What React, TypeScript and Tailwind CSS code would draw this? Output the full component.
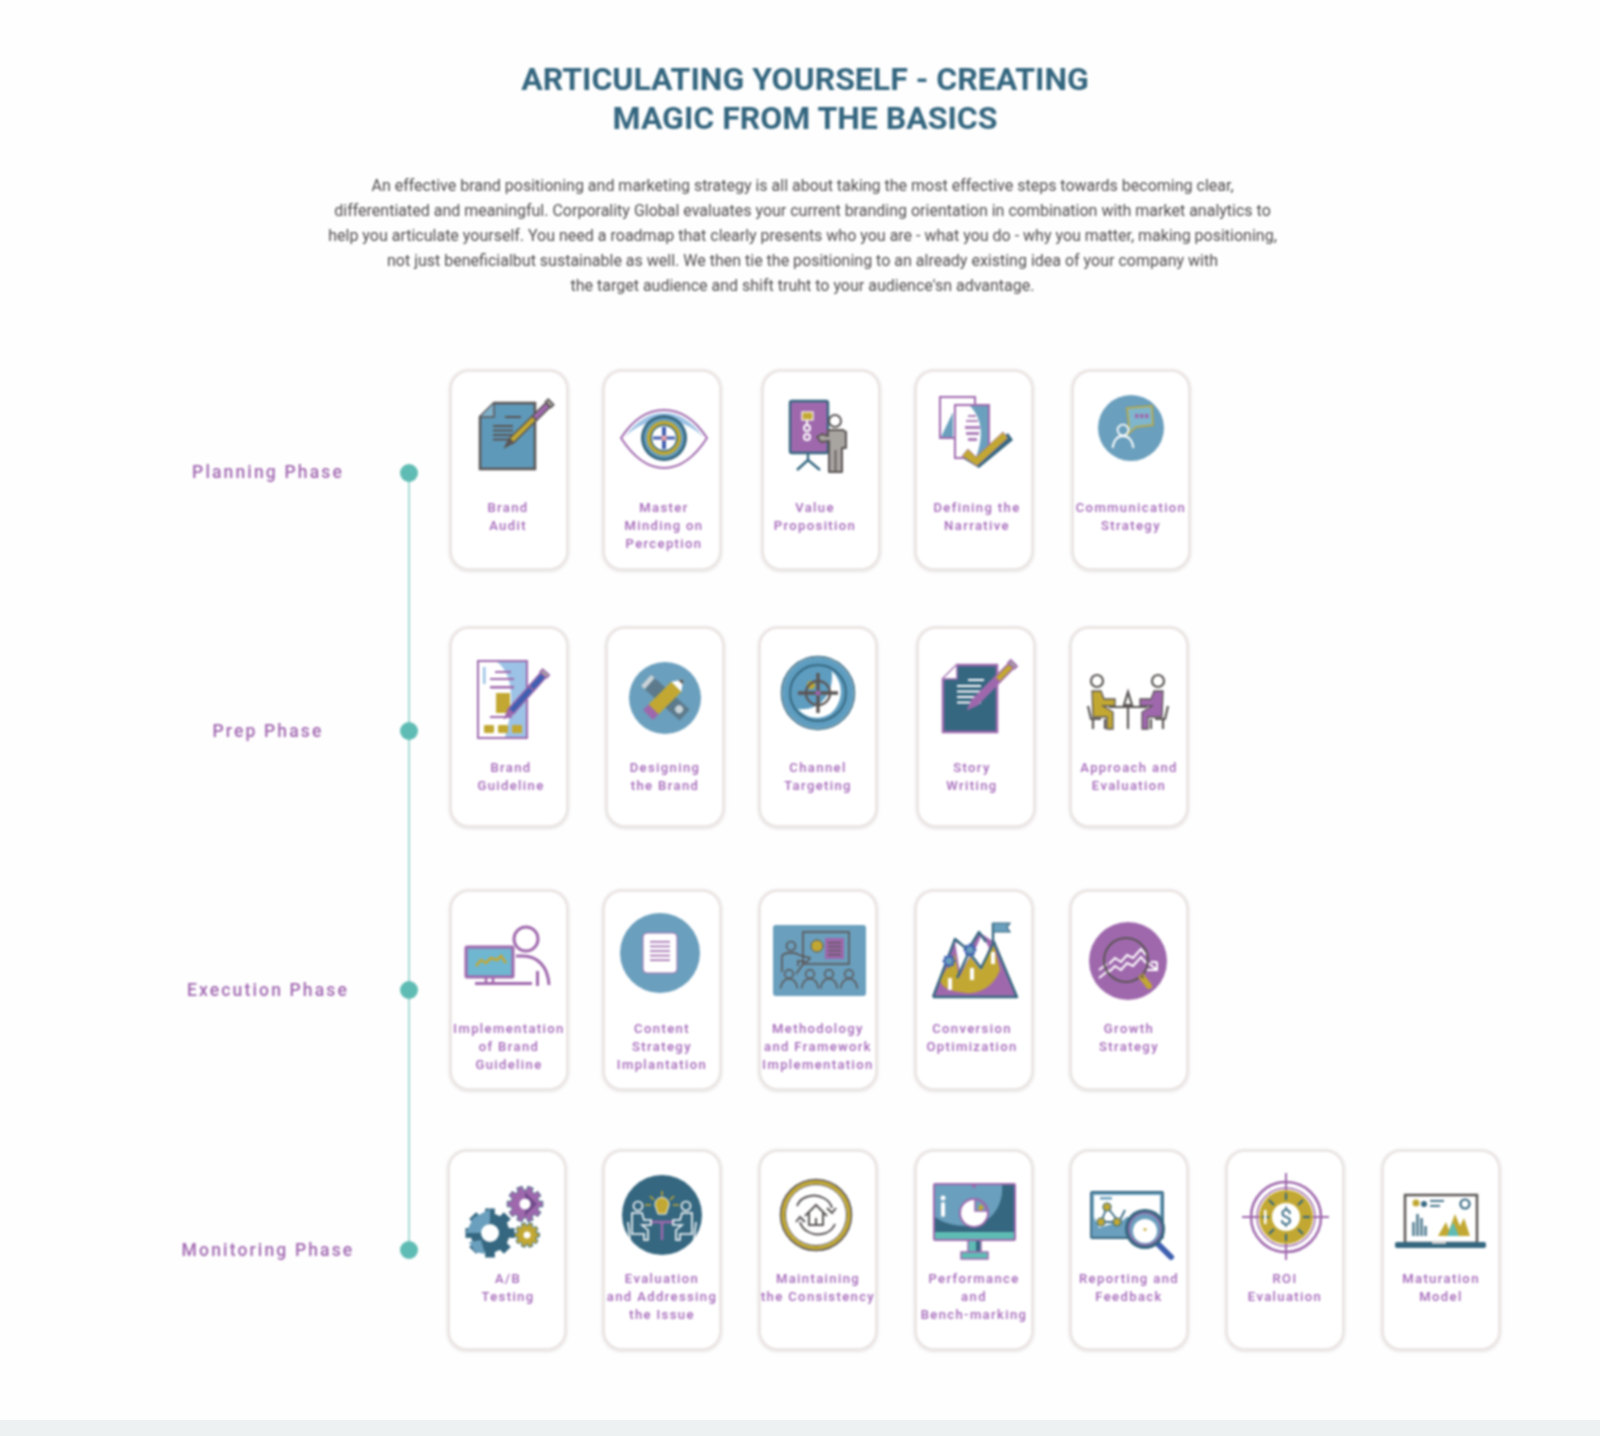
import React from 'react';

const BLUE = '#6a9fbd';
const TEAL = '#356780';
const PURPLE = '#9f68ad';
const GOLD = '#c2a832';
const GRAY = '#5b5555';
const LBLUE = '#9cc2e5';
const AQUA = '#5fbcb4';
const ROYAL = '#3f5fb0';

// icons are drawn in card coordinates, so the viewBox skips the card border
const Ico = ({ children }: { children: React.ReactNode }) => (
  <svg viewBox="2 2 112 118" width={112} height={118} className="mx-auto block">
    {children}
  </svg>
);

const gear = (cx: number, cy: number, r: number, teeth: number) => {
  const pts: string[] = [];
  const inner = r * 0.78;
  const step = (Math.PI * 2) / teeth;
  for (let i = 0; i < teeth; i++) {
    const a = i * step;
    const p = (rad: number, off: number) =>
      `${(cx + rad * Math.cos(a + off)).toFixed(1)},${(cy + rad * Math.sin(a + off)).toFixed(1)}`;
    pts.push(p(inner, -step * 0.5), p(inner, -step * 0.32), p(r, -step * 0.25), p(r, step * 0.25), p(inner, step * 0.32));
  }
  return pts.join(' ');
};

const Pen = ({ x1, y1, x2, y2, w = 5, a = GOLD, b = PURPLE, line = GRAY }: { x1: number; y1: number; x2: number; y2: number; w?: number; a?: string; b?: string; line?: string }) => {
  const len = Math.hypot(x2 - x1, y2 - y1);
  const ang = (Math.atan2(y2 - y1, x2 - x1) * 180) / Math.PI;
  return (
    <g transform={`translate(${x1} ${y1}) rotate(${ang})`} stroke={line} strokeWidth={1.5}>
      <polygon points={`0,0 9,${-w / 2} 9,${w / 2}`} fill={line} />
      <rect x={9} y={-w / 2} width={len * 0.5} height={w} fill={a} />
      <rect x={9 + len * 0.5} y={-w / 2} width={len * 0.5 - 13} height={w} fill={b} />
      <rect x={len - 4} y={-w / 2 - 1} width={4} height={w + 2} fill="#a8a4a0" />
    </g>
  );
};

const Lines = ({ x, y, w, n, gap = 5, h = 2, color = GRAY }: { x: number; y: number; w: number; n: number; gap?: number; h?: number; color?: string }) => (
  <g fill={color}>
    {Array.from({ length: n }).map((_, i) => (
      <rect key={i} x={x} y={y + i * gap} width={w} height={h} />
    ))}
  </g>
);

const Person = ({ x, y, s = 1, color = '#fff', sw = 1.5 }: { x: number; y: number; s?: number; color?: string; sw?: number }) => (
  <g fill="none" stroke={color} strokeWidth={sw}>
    <circle cx={x} cy={y} r={3.6 * s} />
    <path d={`M${x - 7 * s} ${y + 12 * s} C${x - 6 * s} ${y + 6 * s} ${x - 3 * s} ${y + 4 * s} ${x} ${y + 4 * s} C${x + 3 * s} ${y + 4 * s} ${x + 6 * s} ${y + 6 * s} ${x + 7 * s} ${y + 12 * s}`} />
  </g>
);

const BrandAudit = () => (
  <Ico>
    <path d="M29 47 L43 33 H84 V99 H29 Z" fill="#5e99b9" stroke={GRAY} strokeWidth={2.5} />
    <path d="M29 47 H43 V33" fill="#7fb0c9" stroke={GRAY} strokeWidth={1.5} />
    <rect x={54} y={46} width={16} height={2} fill={GRAY} />
    <Lines x={42} y={55} w={20} n={4} gap={4.5} />
    <Pen x1={54} y1={77} x2={100} y2={32} w={6} />
  </Ico>
);

const MasterMinding = () => (
  <Ico>
    <path d="M17 68 C30 48 45 40 60 40 C75 40 90 48 103 68 C90 88 75 98 60 98 C45 98 30 88 17 68 Z" fill="#fff" stroke={PURPLE} strokeWidth={2} />
    <path d="M21 67 C33 50 46 43 60 43 C74 43 87 50 99 67 C88 56 74 50 60 50 C46 50 32 56 21 67 Z" fill={LBLUE} />
    <circle cx={60} cy={68} r={23} fill={TEAL} />
    <circle cx={60} cy={68} r={20} fill={BLUE} />
    <circle cx={60} cy={68} r={17} fill={GOLD} />
    <circle cx={60} cy={68} r={13.5} fill={TEAL} />
    <circle cx={60} cy={68} r={12} fill="#fff" />
    <rect x={58} y={57} width={4} height={22} fill={ROYAL} />
    <rect x={49} y={66.5} width={22} height={3} fill={ROYAL} />
    <rect x={57.5} y={65.5} width={5} height={5} fill="#e8a0a8" />
  </Ico>
);

const ValueProp = () => (
  <Ico>
    <path d="M45 82 V90 M45 90 L34 100 M45 90 L57 100" stroke={TEAL} strokeWidth={2.4} fill="none" />
    <rect x={27} y={31} width={38} height={52} rx={2} fill={PURPLE} stroke={TEAL} strokeWidth={2.4} />
    <rect x={39} y={42} width={11} height={8} fill={GOLD} stroke="#fff" strokeWidth={1.2} />
    <g fill="none" stroke="#fff" strokeWidth={2}>
      <path d="M44 50 V54" />
      <circle cx={44} cy={58} r={3} />
      <circle cx={44} cy={67} r={3} />
    </g>
    <circle cx={72} cy={51} r={6} fill="#fff" stroke={GRAY} strokeWidth={2} />
    <path d="M54 67 L59 64 L65 66 V60 H80 L83 62 V78 H79 V102 H66 V78 V71 L58 72 Z" fill="#a8a4a0" stroke={GRAY} strokeWidth={2} strokeLinejoin="round" />
    <path d="M72.5 80 V102" stroke={GRAY} strokeWidth={1.5} />
  </Ico>
);

const DefiningNarrative = () => (
  <Ico>
    <rect x={24} y={27} width={35} height={41} fill="#fff" stroke={PURPLE} strokeWidth={2} />
    <path d="M25 67 L37 42 V67 Z" fill={BLUE} />
    <rect x={39} y={35} width={34} height={53} fill={BLUE} stroke={PURPLE} strokeWidth={2} />
    <path d="M40 36 H54 C66 48 68 66 60 87 H40 Z" fill="#fff" />
    <g fill={PURPLE} opacity={0.85}>
      <rect x={52} y={45} width={8} height={2} />
      <rect x={50} y={50} width={12} height={2} />
      <rect x={49} y={56} width={15} height={3} />
      <rect x={50} y={62} width={13} height={3} />
      <rect x={52} y={68} width={9} height={3} />
    </g>
    <path d="M48 89 L63 98 L97 70 L92 63 L62 89 L53 81 Z" fill={TEAL} />
    <path d="M46 86 L61 96 L92 68 L87 62 L60 87 L52 79 Z" fill={GOLD} stroke={PURPLE} strokeWidth={0.8} />
  </Ico>
);

const Communication = () => (
  <Ico>
    <circle cx={58} cy={58} r={33} fill={BLUE} />
    <path d="M54 38 L79 36 L80 55 L63 57 L55 64 L56 56 Z" fill="#7fb6cd" stroke={GOLD} strokeWidth={1.5} />
    <g fill={PURPLE}>
      <rect x={62} y={44} width={3.5} height={4} />
      <rect x={67} y={44} width={3.5} height={4} />
      <rect x={72} y={44} width={3.5} height={4} />
    </g>
    <Person x={50} y={60} s={1.5} sw={1.8} />
  </Ico>
);

const BrandGuideline = () => (
  <Ico>
    <rect x={27} y={34} width={49} height={77} fill={LBLUE} stroke={PURPLE} strokeWidth={2} />
    <path d="M28 35 H46 C62 46 64 76 54 110 H28 Z" fill="#fff" />
    <rect x={32} y={40} width={2.5} height={17} fill={LBLUE} />
    <rect x={44} y={44} width={16} height={2} fill={PURPLE} />
    <rect x={39} y={51} width={24} height={2} fill={PURPLE} />
    <rect x={39} y={59} width={24} height={2.5} fill={PURPLE} />
    <rect x={45} y={66} width={14} height={20} fill={GOLD} />
    <rect x={39} y={89} width={22} height={2} fill={PURPLE} />
    <rect x={33} y={98} width={10} height={8} rx={1} fill={GOLD} />
    <rect x={47} y={98} width={10} height={8} rx={1} fill={GOLD} />
    <rect x={61} y={98} width={10} height={8} rx={1} fill={GOLD} />
    <Pen x1={54} y1={91} x2={95} y2={45} w={7} a={ROYAL} b={ROYAL} line={PURPLE} />
  </Ico>
);

const DesigningBrand = () => (
  <Ico>
    <circle cx={58} cy={71} r={36} fill={BLUE} />
    <g transform="rotate(42 58 71)">
      <rect x={32} y={63} width={52} height={15} fill="#5c7a8c" />
      <rect x={32} y={63} width={5} height={15} fill="#c9d3d8" />
      <circle cx={76} cy={70} r={4} fill="#c9d3d8" />
    </g>
    <g transform="rotate(-45 58 71)">
      <rect x={34} y={64} width={8} height={14} fill={PURPLE} />
      <rect x={42} y={64} width={32} height={14} fill={GOLD} />
      <polygon points="74,64 84,71 74,78" fill="#fff" />
      <polygon points="80,68 84,71 80,74" fill={GRAY} />
    </g>
  </Ico>
);

const ChannelTargeting = () => (
  <Ico>
    <circle cx={58} cy={66} r={36.5} fill="#fff" stroke={TEAL} strokeWidth={1.5} />
    <circle cx={58} cy={66} r={32} fill="none" stroke="#5e9dc0" strokeWidth={7} />
    <circle cx={58} cy={66} r={28} fill="#5e9dc0" stroke={TEAL} strokeWidth={2} />
    <path d="M38 82 C56 84 74 72 72 44 C86 58 82 78 70 87 C60 93 46 92 38 82 Z" fill="#fff" />
    <circle cx={51} cy={58} r={4} fill={GOLD} />
    <circle cx={58} cy={66} r={12} fill="none" stroke={GRAY} strokeWidth={2.4} />
    <path d="M58 46 V86 M38 66 H78" stroke={GRAY} strokeWidth={3.4} />
    <circle cx={58} cy={66} r={2.5} fill={PURPLE} />
  </Ico>
);

const StoryWriting = () => (
  <Ico>
    <path d="M25 52 L39 38 H79 V105 H25 Z" fill={TEAL} stroke={PURPLE} strokeWidth={2.5} />
    <path d="M25 52 H39 V38" fill="#fff" stroke={PURPLE} strokeWidth={1.5} />
    <rect x={50} y={52} width={16} height={2} fill="#fff" />
    <Lines x={39} y={58} w={24} n={4} gap={5.5} color="#fff" />
    <Pen x1={50} y1={82} x2={96} y2={36} w={7} a={PURPLE} b={GOLD} line={PURPLE} />
  </Ico>
);

const ApproachEval = () => (
  <Ico>
    <g fill="none" stroke={GRAY} strokeWidth={2.2}>
      <circle cx={26} cy={54} r={6} />
      <circle cx={87} cy={54} r={6} />
      <path d="M17 79 L20 92 H30 M22 92 V102 M34 92 V102" />
      <path d="M97 79 L94 92 H84 M92 92 V102 M80 92 V102" />
      <path d="M57 79 V102 M38 80 H76" />
      <path d="M57 65 L53 78 H61 Z" fill="#fff" />
    </g>
    <path d="M21 64 H30 L33 72 H44 V79 H32 L42 85 V102 H36 V90 H22 Z" fill={GOLD} stroke={GRAY} strokeWidth={1.3} />
    <path d="M92 64 H83 L80 72 H69 V79 H81 L71 85 V102 H77 V90 H91 Z" fill={PURPLE} stroke={GRAY} strokeWidth={1.3} />
  </Ico>
);

const Implementation = () => (
  <Ico>
    <circle cx={75} cy={49} r={12} fill="none" stroke={PURPLE} strokeWidth={3} />
    <rect x={15} y={57} width={47} height={30} rx={1} fill="#6fb6d0" stroke={PURPLE} strokeWidth={3} />
    <path d="M25 76 L30 70 L35 73 L40 68 L46 70 L50 66 L55 73" fill="none" stroke={GOLD} strokeWidth={2.5} />
    <path d="M35 88 V92 M42 88 V92" stroke={PURPLE} strokeWidth={2.5} />
    <path d="M24 93.5 H81" stroke={PURPLE} strokeWidth={3} />
    <path d="M65 66 H72 C86 66 97 76 98 95" fill="none" stroke={PURPLE} strokeWidth={3} />
    <path d="M86.5 81 V96" stroke={PURPLE} strokeWidth={3} />
  </Ico>
);

const ContentStrategy = () => (
  <Ico>
    <circle cx={56} cy={63} r={40} fill={BLUE} />
    <rect x={39} y={43} width={34} height={40} rx={4} fill="#fff" stroke={PURPLE} strokeWidth={1} />
    <Lines x={46} y={51} w={20} n={5} gap={4.6} h={1.6} color={PURPLE} />
  </Ico>
);

const Methodology = () => (
  <Ico>
    <rect x={13} y={35} width={93} height={71} rx={3} fill={BLUE} />
    <rect x={43} y={42} width={46} height={32} fill="none" stroke={GRAY} strokeWidth={1.6} />
    <circle cx={57} cy={56} r={6} fill={GOLD} stroke={GRAY} strokeWidth={1} />
    <rect x={65} y={48} width={19} height={21} fill={PURPLE} />
    <Lines x={68} y={52} w={13} n={4} gap={4} h={1.4} />
    <g fill="none" stroke={GRAY} strokeWidth={1.6}>
      <circle cx={31} cy={56} r={4.5} />
      <path d="M22 82 V66 C24 62 36 62 39 65 L50 68 L47 72 L38 71 V76" />
      <path d="M36 84 L44 73" />
    </g>
    <Person x={29} y={84} s={1.2} color={GRAY} sw={1.5} />
    <Person x={50} y={84} s={1.2} color={GRAY} sw={1.5} />
    <Person x={69} y={84} s={1.2} color={GRAY} sw={1.5} />
    <Person x={89} y={84} s={1.2} color={GRAY} sw={1.5} />
  </Ico>
);

const Conversion = () => (
  <Ico>
    <path d="M17 107 L39 49 L53 62 L63 42 L78 52 L101 107 Z" fill={PURPLE} />
    <path d="M24 90 L39 64 L43 88 L54 67 L65 80 L77 52 L84 80 C76 100 58 106 44 102 C34 101 26 98 24 90 Z" fill={GOLD} />
    <path d="M39 52 L44 83 L54 66 L65 80 L73 58 L66 44 L59 60 L51 58 Z" fill="#fff" />
    <g fill="none" stroke={TEAL} strokeWidth={2.4} strokeLinejoin="round">
      <path d="M17 107 H101 L78 52 L65 78 L53 62 L41 88" />
      <path d="M17 107 L39 49 L52 60 L63 42 L70 52" />
      <path d="M77 52 V33" />
    </g>
    <path d="M77 33 H94 L91 37.5 L94 42 H77 Z" fill={BLUE} stroke={TEAL} strokeWidth={1.2} />
    <polygon points={gear(33, 71, 6.5, 8)} fill={ROYAL} />
    <polygon points={gear(54, 60, 6.5, 8)} fill={ROYAL} />
    <circle cx={33} cy={71} r={3.5} fill={BLUE} />
    <circle cx={54} cy={60} r={3.5} fill={BLUE} />
    <g fill="#fff">
      <rect x={32} y={88} width={4} height={12} />
      <rect x={54} y={78} width={4} height={12} />
      <rect x={75} y={62} width={4} height={12} />
    </g>
  </Ico>
);

const Growth = () => (
  <Ico>
    <circle cx={57} cy={71} r={39} fill={PURPLE} />
    <g fill="none" stroke="#fff" strokeWidth={2}>
      <path d="M38 74 L44 68 L50 72 L56 65 L62 68 L70 59 L75 65" />
      <path d="M38 82 L44 76 L50 80 L56 73 L62 76 L70 67 L75 73" />
      <path d="M28 80 L36 74 M28 88 L38 80" />
      <path d="M76 80 H86 V72 M80 72 H86 M76 72 L86 80" />
    </g>
    <circle cx={55} cy={70} r={22} fill="none" stroke={GRAY} strokeWidth={2} />
    <path d="M71 87 L78 96" stroke={GOLD} strokeWidth={6} strokeLinecap="round" />
    <path d="M70 85 L72 88" stroke={GRAY} strokeWidth={2} />
  </Ico>
);

const ABTesting = () => (
  <Ico>
    <polygon points={gear(41, 83, 25, 8)} fill={TEAL} />
    <path d="M24 68 L41 59 V72 L31 83 H17 Z" fill={BLUE} />
    <path d="M20 92 L32 90 L36 104 L26 102 Z" fill={BLUE} />
    <circle cx={41} cy={83} r={9} fill="#fff" />
    <polygon points={gear(76, 54, 18, 10)} fill={PURPLE} stroke={TEAL} strokeWidth={0.8} />
    <path d="M76 42 L88 54 L76 66 Z" fill="#6f4a8a" />
    <circle cx={76} cy={54} r={5.5} fill="#fff" />
    <polygon points={gear(78, 85, 12.5, 10)} fill={GOLD} stroke={TEAL} strokeWidth={1} />
    <circle cx={78} cy={85} r={3.5} fill="#fff" />
  </Ico>
);

const EvaluationIssue = () => (
  <Ico>
    <circle cx={58} cy={65} r={40} fill={TEAL} />
    <path d="M52 58 A 7 7 0 1 1 64 58 L62 64 H54 Z" fill={GOLD} stroke="#fff" strokeWidth={1} />
    <g stroke={GOLD} strokeWidth={1.6}>
      <path d="M58 41 V46 M46 46 L50 50 M70 46 L66 50 M41 55 H47 M69 55 H75" />
    </g>
    <path d="M46 72 H70 M58 72 V90" stroke={PURPLE} strokeWidth={2.5} />
    <g fill="none" stroke="#fff" strokeWidth={1.6}>
      <circle cx={34} cy={56} r={4.5} />
      <circle cx={82} cy={56} r={4.5} />
      <path d="M28 84 V63 H38 L40 70 H47 V75 H38 L44 80 V90 H40 V84 Z" />
      <path d="M88 84 V63 H78 L76 70 H69 V75 H78 L72 80 V90 H76 V84 Z" />
      <path d="M24 72 L26 90 M92 72 L90 90" />
    </g>
  </Ico>
);

const Maintaining = () => (
  <Ico>
    <circle cx={56} cy={65} r={33} fill="#fff" stroke={GOLD} strokeWidth={4} />
    <circle cx={56} cy={65} r={35.5} fill="none" stroke={GRAY} strokeWidth={1.5} />
    <circle cx={56} cy={65} r={30.5} fill="none" stroke={GRAY} strokeWidth={1} />
    <g fill="none" stroke={GRAY} strokeWidth={2}>
      <path d="M40 72 C42 80 52 86 62 84 C68 83 73 79 75 74" />
      <path d="M72 58 C70 50 60 44 50 46 C44 47 39 51 37 56" />
      <path d="M36 72 L40 67 L45 72 M76 58 L72 63 L67 58" />
      <path d="M45 66 L56 55 L67 66 M49 63 V75 H63 V63 M56 75 V68" />
    </g>
  </Ico>
);

const Performance = () => (
  <Ico>
    <rect x={52} y={90} width={13} height={12} fill={AQUA} stroke={PURPLE} strokeWidth={1.5} />
    <rect x={60} y={91} width={4} height={10} fill={TEAL} />
    <rect x={45} y={102} width={27} height={7} fill={AQUA} stroke={PURPLE} strokeWidth={1.5} />
    <rect x={18} y={34} width={81} height={56} rx={1} fill={TEAL} stroke={PURPLE} strokeWidth={2} />
    <path d="M19 35 H86 C88 60 70 76 52 76 C38 76 27 73 19 67 Z" fill={BLUE} />
    <rect x={19} y={82} width={79} height={7} fill={AQUA} />
    <circle cx={58} cy={36} r={2} fill={PURPLE} />
    <circle cx={27} cy={48} r={2.5} fill="#fff" />
    <rect x={25} y={52} width={4} height={15} rx={2} fill="#fff" />
    <circle cx={58} cy={63} r={14} fill="#fff" stroke={PURPLE} strokeWidth={2} />
    <path d="M59 61 V49 C65 50 70 55 71 61 Z" fill={BLUE} stroke={PURPLE} strokeWidth={1.5} />
    <path d="M64 54 L68 57 L66 60 H62 Z" fill={GOLD} />
  </Ico>
);

const Reporting = () => (
  <Ico>
    <rect x={20} y={42} width={72} height={46} rx={1} fill={BLUE} stroke={TEAL} strokeWidth={1.8} />
    <rect x={23} y={45} width={66} height={22} fill="#fff" />
    <path d="M23 67 L28 78 L52 70 L70 55 L88 48 V66 Z" fill="#fff" />
    <g fill="none" stroke={TEAL} strokeWidth={1.8}>
      <path d="M36 57 L30 72 H48 L36 57 M48 72 L54 60" />
    </g>
    <rect x={29} y={47} width={12} height={2.5} fill={BLUE} />
    <circle cx={36} cy={57} r={4} fill={GOLD} stroke={TEAL} strokeWidth={1.2} />
    <circle cx={30} cy={72} r={4} fill={GOLD} stroke={TEAL} strokeWidth={1.2} />
    <circle cx={46} cy={72} r={4} fill={GOLD} stroke={TEAL} strokeWidth={1.2} />
    <path d="M87 94 L100 107" stroke={ROYAL} strokeWidth={6} strokeLinecap="round" />
    <circle cx={74} cy={79} r={20} fill={TEAL} />
    <circle cx={74} cy={79} r={16} fill={BLUE} stroke={PURPLE} strokeWidth={1.5} />
    <circle cx={74} cy={81} r={12} fill="#fff" />
    <path d="M72.5 79.5 h3 M74 78 v3" stroke={GOLD} strokeWidth={1.4} />
  </Ico>
);

const RoiEvaluation = () => (
  <Ico>
    <circle cx={59} cy={67} r={35} fill="none" stroke={PURPLE} strokeWidth={2.5} />
    <circle cx={59} cy={67} r={29} fill="none" stroke={PURPLE} strokeWidth={1.5} />
    <path d="M59 23 V110 M15 67 H102" stroke={PURPLE} strokeWidth={2} />
    <circle cx={59} cy={67} r={27} fill={GOLD} />
    <circle cx={59} cy={67} r={14} fill="#fff" />
    <g stroke={TEAL} strokeWidth={2}>
      <path d="M59 43 V50 M59 84 V91 M35 67 H42 M76 67 H83 M42 50 L47 55 M76 50 L71 55 M42 84 L47 79 M76 84 L71 79" />
    </g>
    <rect x={37} y={60} width={2.5} height={14} fill="#fff" />
    <text x={59} y={75} textAnchor="middle" fontSize={22} fontFamily="Roboto, sans-serif" fill={TEAL}>$</text>
  </Ico>
);

const Maturation = () => (
  <Ico>
    <rect x={22} y={45} width={72} height={48} fill="#fff" stroke={GRAY} strokeWidth={2.5} />
    <rect x={12} y={92} width={91} height={6} rx={2} fill={TEAL} />
    <rect x={49} y={92} width={14} height={2} fill="#c9c9c9" />
    <circle cx={33} cy={53} r={3.5} fill={GOLD} />
    <circle cx={41} cy={54} r={3} fill={TEAL} />
    <rect x={47} y={50} width={14} height={1.8} fill={TEAL} />
    <rect x={47} y={55} width={10} height={1.8} fill={TEAL} />
    <circle cx={82} cy={54} r={4.5} fill="none" stroke={TEAL} strokeWidth={2.2} />
    <g fill={TEAL} opacity={0.75}>
      <rect x={29} y={72} width={3} height={14} />
      <rect x={33} y={64} width={3} height={22} />
      <rect x={37} y={68} width={3} height={18} />
      <rect x={41} y={76} width={3} height={10} />
    </g>
    <path d="M55 86 L63 72 L66 80 L72 64 L77 76 L81 68 L87 86 Z" fill={GOLD} />
    <path d="M64 86 L70 72 L76 86 Z" fill={AQUA} />
  </Ico>
);

type CardData = { label: string[]; icon: React.FC; ml: string; shift?: string };

const rows: { name: string; mt: string; labelPad: string; dotPad: string; namePad: string; cards: CardData[] }[] = [
  {
    name: 'Planning Phase',
    mt: 'mt-[0px]',
    labelPad: 'pt-[9px]',
    dotPad: 'pt-[6px]',
    namePad: 'pt-[4px]',
    cards: [
      { label: ['Brand', 'Audit'], icon: BrandAudit, ml: 'ml-[9px]', shift: 'pr-[2px]' },
      { label: ['Master', 'Minding on', 'Perception'], icon: MasterMinding, ml: 'ml-[33px]', shift: 'pl-[4px]' },
      { label: ['Value', 'Proposition'], icon: ValueProp, ml: 'ml-[39px]', shift: 'pr-[12px]' },
      { label: ['Defining the', 'Narrative'], icon: DefiningNarrative, ml: 'ml-[33px]', shift: 'pl-[6px]' },
      { label: ['Communication', 'Strategy'], icon: Communication, ml: 'ml-[37px]' },
    ],
  },
  {
    name: 'Prep Phase',
    mt: 'mt-[55px]',
    labelPad: 'pt-[12px]',
    dotPad: 'pt-[8px]',
    namePad: 'pt-[8px]',
    cards: [
      { label: ['Brand', 'Guideline'], icon: BrandGuideline, ml: 'ml-[9px]', shift: 'pl-[4px]' },
      { label: ['Designing', 'the Brand'], icon: DesigningBrand, ml: 'ml-[36px]' },
      { label: ['Channel', 'Targeting'], icon: ChannelTargeting, ml: 'ml-[33px]' },
      { label: ['Story', 'Writing'], icon: StoryWriting, ml: 'ml-[38px]', shift: 'pr-[8px]' },
      { label: ['Approach and', 'Evaluation'], icon: ApproachEval, ml: 'ml-[33px]' },
    ],
  },
  {
    name: 'Execution Phase',
    mt: 'mt-[61px]',
    labelPad: 'pt-[10px]',
    dotPad: 'pt-[0px]',
    namePad: 'pt-[0px]',
    cards: [
      { label: ['Implementation', 'of Brand', 'Guideline'], icon: Implementation, ml: 'ml-[9px]' },
      { label: ['Content', 'Strategy', 'Implantation'], icon: ContentStrategy, ml: 'ml-[33px]' },
      { label: ['Methodology', 'and Framework', 'Implementation'], icon: Methodology, ml: 'ml-[36px]' },
      { label: ['Conversion', 'Optimization'], icon: Conversion, ml: 'ml-[36px]', shift: 'pr-[4px]' },
      { label: ['Growth', 'Strategy'], icon: Growth, ml: 'ml-[35px]' },
    ],
  },
  {
    name: 'Monitoring Phase',
    mt: 'mt-[58px]',
    labelPad: 'pt-[0px]',
    dotPad: 'pt-[0px]',
    namePad: 'pt-[0px]',
    cards: [
      { label: ['A/B', 'Testing'], icon: ABTesting, ml: 'ml-[7px]', shift: 'pl-[2px]' },
      { label: ['Evaluation', 'and Addressing', 'the Issue'], icon: EvaluationIssue, ml: 'ml-[35px]' },
      { label: ['Maintaining', 'the Consistency'], icon: Maintaining, ml: 'ml-[36px]' },
      { label: ['Performance', 'and', 'Bench-marking'], icon: Performance, ml: 'ml-[36px]' },
      { label: ['Reporting and', 'Feedback'], icon: Reporting, ml: 'ml-[35px]' },
      { label: ['ROI', 'Evaluation'], icon: RoiEvaluation, ml: 'ml-[36px]' },
      { label: ['Maturation', 'Model'], icon: Maturation, ml: 'ml-[36px]' },
    ],
  },
];

const paragraph = [
  'An effective brand positioning and marketing strategy is all about taking the most effective steps towards becoming clear,',
  'differentiated and meaningful. Corporality Global evaluates your current branding orientation in combination with market analytics to',
  'help you articulate yourself. You need a roadmap that clearly presents who you are - what you do - why you matter, making positioning,',
  'not just beneficialbut sustainable as well. We then tie the positioning to an already existing idea of your company with',
  "the target audience and shift truht to your audience'sn advantage.",
];

const Card = ({ data, labelPad }: { data: CardData; labelPad: string }) => {
  const Icon = data.icon;
  return (
    <div className={`${data.ml} h-[202px] w-[120px] shrink-0 rounded-[20px] border-[3px] border-[#ebe6e4] bg-white shadow-[0_1px_3px_rgba(120,100,100,0.16)]`}>
      <Icon />
      <div className={`${labelPad} ${data.shift ?? ''} flex flex-col items-center whitespace-nowrap text-[13px] font-medium leading-[18px] tracking-[1.4px] text-[#a366b8]`}>
        {data.label.map(l => (
          <span key={l}>{l}</span>
        ))}
      </div>
    </div>
  );
};

export default function App() {
  return (
    <div className="flex min-h-[1436px] flex-col bg-[#fefefe] font-['Roboto',sans-serif]">
      <main className="flex-1 blur-[0.8px]">
        <h1 className="pl-[10px] pt-[60px] text-center text-[32px] font-bold leading-[39px] text-[#34667f]">
          ARTICULATING YOURSELF - CREATING
          <br />
          MAGIC FROM THE BASICS
        </h1>
        <div className="mt-[35px] flex flex-col items-center whitespace-nowrap pl-[5px] text-[16px] leading-[25px] text-[#4f4b4d]">
          {paragraph.map(p => (
            <p key={p}>{p}</p>
          ))}
        </div>

        <section className="relative mt-[71px]">
          <div className="absolute left-[408px] top-[104px] h-[777px] w-[2px] bg-[#a8dcd8]" />
          {rows.map(row => (
            <div key={row.name} className={`${row.mt} flex`}>
              <div className="flex w-[440px] shrink-0 items-center pl-[168px]">
                <div className={`${row.namePad} w-[200px] text-center text-[17.5px] font-medium tracking-[2.15px] text-[#a066b0]`}>{row.name}</div>
                <div className={`${row.dotPad} ml-[32px]`}>
                  <div className="relative size-[18px] rounded-full bg-[#5fbcb4]" />
                </div>
              </div>
              {row.cards.map(c => (
                <Card key={c.label.join(' ')} data={c} labelPad={row.labelPad} />
              ))}
            </div>
          ))}
        </section>
      </main>
      <footer className="h-[16px] bg-[#eef1f2]" />
    </div>
  );
}
